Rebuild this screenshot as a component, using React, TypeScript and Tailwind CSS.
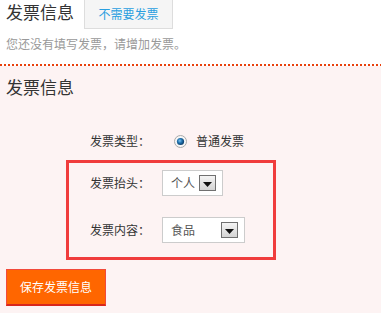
import React from "react";

function Arrow() {
  return (
    <span className="flex h-[16px] w-[17px] items-center justify-center border border-[#707070] bg-[linear-gradient(#f4f4f4,#d4d4d4)]">
      <svg width="9" height="5" viewBox="0 0 9 5" className="mt-[2px]">
        <path d="M0 0H9L4.5 5Z" fill="#111" />
      </svg>
    </span>
  );
}

function FakeSelect({ value, width, height }: { value: string; width: string; height: string }) {
  return (
    <div className={`flex items-center justify-between border border-[#cccccc] bg-white pl-[8px] pr-[6px] ${width} ${height}`}>
      <span className="text-[12px] text-[#555]">{value}</span>
      <Arrow />
    </div>
  );
}

export default function App() {
  return (
    <div className="flex h-[313px] w-[381px] flex-col bg-white font-['Noto_Sans_CJK_SC','Noto_Sans',sans-serif] text-[#333]">
      <div className="flex h-[30px]">
        <h2 className="pl-[6px] pt-[1px] text-[17px] leading-[22px] text-[#333]">发票信息</h2>
        <button className="ml-[10px] h-[29px] w-[89px] border border-t-0 border-[#dddddd] bg-[#f5f5f5] text-[12px] text-[#2a9fe0]">
          不需要发票
        </button>
      </div>
      <p className="mt-[6px] pl-[6px] text-[12px] leading-[16px] text-[#999]">您还没有填写发票，请增加发票。</p>
      <div className="mt-[12px] h-[2px] bg-[repeating-linear-gradient(to_right,#e8400c_0_2px,transparent_2px_4px)]" />

      <div className="flex-1 bg-[#fdf3f3] pt-[9px]">
        <h3 className="pl-[6px] text-[17px] leading-[24px] text-[#333]">发票信息</h3>

        <div className="mt-[30px] flex h-[24px] items-center pl-[90px] text-[12px]">
          <span className="w-[72px]">发票类型：</span>
          <svg width="13" height="13" viewBox="0 0 13 13" className="ml-[12px]">
            <defs>
              <radialGradient id="dot" cx="0.4" cy="0.4" r="0.6">
                <stop offset="0" stopColor="#7fc4f0" />
                <stop offset="0.5" stopColor="#2173b0" />
                <stop offset="1" stopColor="#0d3e6a" />
              </radialGradient>
            </defs>
            <circle cx="6.5" cy="6.5" r="6" fill="#f6f6f6" stroke="#a9a9a9" />
            <circle cx="6.5" cy="6.5" r="3.6" fill="url(#dot)" />
          </svg>
          <span className="ml-[9px]">普通发票</span>
        </div>

        <div className="ml-[66px] mt-[7px] flex h-[100px] w-[210px] flex-col border-[3px] border-[#f03c3c] pl-[21px] pt-[7px]">
          <div className="flex items-center text-[12px]">
            <span className="w-[72px]">发票抬头：</span>
            <FakeSelect value="个人" width="w-[61px]" height="h-[26px]" />
          </div>
          <div className="mt-[21px] flex items-center text-[12px]">
            <span className="w-[72px]">发票内容：</span>
            <FakeSelect value="食品" width="w-[83px]" height="h-[26px]" />
          </div>
        </div>

        <button className="ml-[6px] mt-[9px] h-[37px] w-[100px] border border-b-2 border-[#f24a3a] border-b-[#d8261c] bg-[#ff6600] text-[12px] text-white">
          保存发票信息
        </button>
      </div>
    </div>
  );
}
